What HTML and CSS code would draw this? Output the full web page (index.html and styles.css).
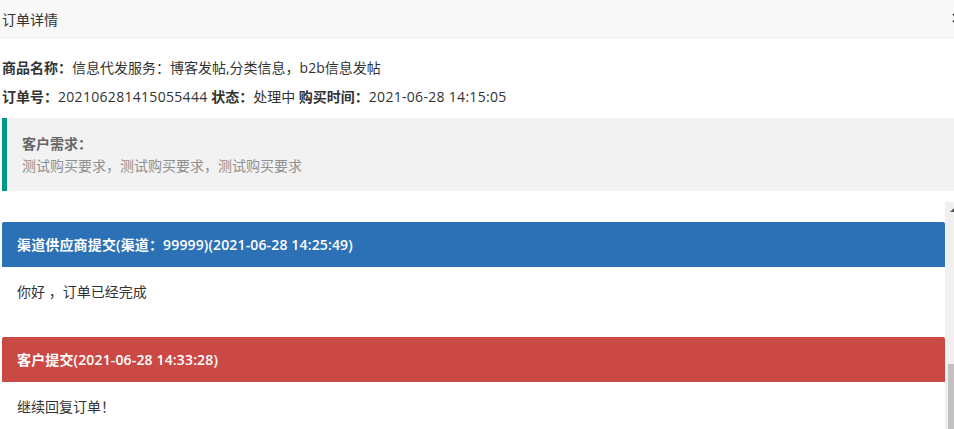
FILE: index.html
```html
<!DOCTYPE html>
<html lang="zh-CN">
<head>
	<meta charset="UTF-8">
	<title>订单详情</title>
	<link rel="stylesheet" href="styles.css">
</head>
<body>
	<div class="layer">
		<div class="layer-title">
			<span>订单详情</span>
			<svg class="layer-close" width="10" height="10" viewBox="0 0 10 10"><path d="M1 1L9 9M9 1L1 9" stroke="#333" stroke-width="1.6"/></svg>
		</div>
		<div class="layer-content">
			<p class="info"><b>商品名称：</b>信息代发服务：博客发帖,分类信息，b2b信息发帖</p>
			<p class="info"><b>订单号：</b><span class="num">202106281415055444</span> <b>状态：</b>处理中 <b>购买时间：</b><span class="num">2021-06-28 14:15:05</span></p>
			<blockquote class="quote">
				<b>客户需求：</b><br>
				测试购买要求，测试购买要求，测试购买要求
			</blockquote>

			<div class="reply-box">
				<div class="reply-list">
					<div class="panel">
						<div class="panel-heading blue">渠道供应商提交(渠道：99999)(2021-06-28 14:25:49)</div>
						<div class="panel-body">你好 ，订单已经完成</div>
					</div>
					<div class="panel">
						<div class="panel-heading red">客户提交(2021-06-28 14:33:28)</div>
						<div class="panel-body">继续回复订单！</div>
					</div>
				</div>
				<!-- 滚动条 -->
				<div class="scrollbar">
					<div class="scroll-arrow"></div>
					<div class="scroll-thumb"></div>
				</div>
			</div>
		</div>
	</div>
</body>
</html>
```

FILE: styles.css
```css
*{
	margin:0;
	padding:0;
	box-sizing:border-box;
}

html,body{
	overflow:hidden;
	background:#fff;
}

body{
	font-family:"Open Sans","Noto Sans CJK SC",sans-serif;
	font-size:14px;
	color:#333;
}

.layer{
	width:962px;
	height:429px;
}

.layer-title{
	height:38px;
	background:#f8f8f8;
	border-bottom:1px solid #eee;
	display:flex;
	align-items:center;
	justify-content:space-between;
	padding-left:2px;
	color:#333;
}

.layer-close{
	display:block;
	margin-top:-1px;
}

.layer-content{
	padding-top:15px;
}

.info{
	padding-left:2px;
	line-height:29px;
}

.info .num{
	letter-spacing:0.3px;
}

.quote{
	margin:7px 0 0 2px;
	padding:15px;
	border-left:5px solid #009688;
	background:#f2f2f2;
	font-size:14px;
	line-height:21.5px;
	color:#8f8f8f;
}

.quote b{
	color:#666;
}

.reply-box{
	margin-top:11px;
	display:flex;
	height:240px;
	overflow:hidden;
}

.reply-list{
	flex:1;
	padding:20px 0 0 2px;
}

.panel{
	margin-bottom:20px;
}

.panel-heading{
	height:45px;
	line-height:45px;
	padding-left:15px;
	color:#fff;
	font-weight:600;
	letter-spacing:0.15px;
	border-radius:2px 2px 0 0;
}

.blue{
	background:#2c71b5;
}

.red{
	background:#cb4945;
}

.panel-body{
	padding:15px;
	line-height:20px;
}

.scrollbar{
	width:17px;
	background:#f0f0f0;
	display:flex;
	flex-direction:column;
	align-items:center;
}

.scroll-arrow{
	margin-top:6px;
	width:0;
	height:0;
	border-left:4px solid transparent;
	border-right:4px solid transparent;
	border-bottom:4px solid #505050;
}

.scroll-thumb{
	margin-top:152px;
	width:13px;
	height:120px;
	background:#c1c1c1;
	margin-left:2px;
}
```
